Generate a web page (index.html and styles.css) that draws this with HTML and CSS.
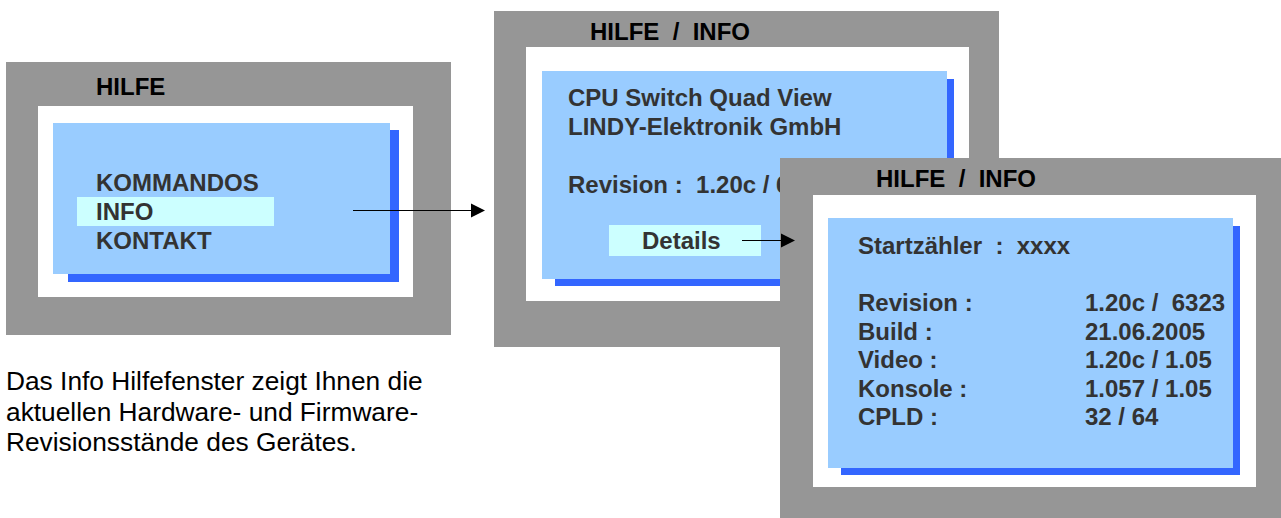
FILE: index.html
```html
<!DOCTYPE html>
<html lang="de">
<head>
    <meta charset="UTF-8">
    <title>Hilfe / Info</title>
    <link rel="stylesheet" href="styles.css">
</head>
<body>
    <div class="canvas">
        <div class="intro">
            <section class="win win-main">
                <h2 class="win-title">HILFE</h2>
                <div class="win-frame">
                    <div class="panel">
                        <ul class="menu">
                            <li>KOMMANDOS</li>
                            <li class="menu-active">INFO</li>
                            <li>KONTAKT</li>
                        </ul>
                    </div>
                </div>
            </section>
            <p class="caption">Das Info Hilfefenster zeigt Ihnen die<br>aktuellen Hardware- und Firmware-<br>Revisionsstände des Gerätes.</p>
        </div>

        <section class="win win-info">
            <h2 class="win-title">HILFE  /  INFO</h2>
            <div class="win-frame">
                <div class="panel">
                    <p class="panel-text">CPU Switch Quad View<br>LINDY-Elektronik GmbH</p>
                    <p class="panel-text rev-line">Revision :  1.20c / 6323</p>
                    <div class="details-btn">Details</div>
                </div>
            </div>
        </section>

        <section class="win win-details">
            <h2 class="win-title">HILFE  /  INFO</h2>
            <div class="win-frame">
                <div class="panel">
                    <p class="panel-text">Startzähler  :  xxxx</p>
                    <dl class="rev-table">
                        <dt>Revision :</dt><dd>1.20c /  6323</dd>
                        <dt>Build :</dt><dd>21.06.2005</dd>
                        <dt>Video :</dt><dd>1.20c / 1.05</dd>
                        <dt>Konsole :</dt><dd>1.057 / 1.05</dd>
                        <dt>CPLD :</dt><dd>32 / 64</dd>
                    </dl>
                </div>
            </div>
        </section>

        <!-- connector arrows -->
        <svg class="arrow arrow-info" width="133" height="15" viewBox="0 0 133 15">
            <line x1="0" y1="7.5" x2="120" y2="7.5" stroke="#000" stroke-width="1.2"/>
            <polygon points="118,0.5 132,7.5 118,14.5" fill="#000"/>
        </svg>
        <svg class="arrow arrow-details" width="54" height="15" viewBox="0 0 54 15">
            <line x1="0" y1="7.5" x2="41" y2="7.5" stroke="#000" stroke-width="1.2"/>
            <polygon points="39,0.5 53,7.5 39,14.5" fill="#000"/>
        </svg>
    </div>
</body>
</html>
```

FILE: styles.css
```css
body {
    margin: 0;
    background: #fff;
    font-family: "Liberation Sans", Arial, sans-serif;
    overflow: hidden;
}
.canvas {
    position: relative;
    width: 1281px;
    height: 518px;
    overflow: hidden;
}
.intro {
    padding: 62px 0 0 6px;
}
.win {
    background: #969696;
    box-sizing: border-box;
}
.win-title {
    margin: 0;
    font-size: 24px;
    line-height: 29px;
    font-weight: bold;
    color: #000;
    white-space: pre;
}
.win-frame {
    position: relative;
    z-index: 0;
    background: #fff;
    box-sizing: border-box;
}
.panel {
    position: relative;
    background: #99ccff;
    box-sizing: border-box;
    color: #333;
    font-size: 24px;
    font-weight: bold;
    line-height: 29px;
}
.panel::before {
    content: "";
    position: absolute;
    left: 13px;
    right: -7px;
    top: 8px;
    bottom: -7px;
    background: #3366ff;
    z-index: -1;
}

/* main menu window */
.win-main {
    width: 445px;
    height: 273px;
    padding-top: 10px;
}
.win-main .win-title {
    margin-left: 90px;
}
.win-main .win-frame {
    margin: 5px 0 0 32px;
    width: 375px;
    height: 191px;
    padding: 17px 0 0 15px;
}
.win-main .panel {
    width: 337px;
    height: 151px;
    padding: 45px 0 0 24px;
}
.win-main .panel::before {
    left: 15px;
    right: -9px;
    top: 7px;
    bottom: -8px;
}
.menu {
    list-style: none;
    margin: 0;
    padding: 0;
}
.menu li {
    width: 197px;
    padding-left: 19px;
    box-sizing: border-box;
}
.menu .menu-active {
    background: #ccffff;
}
.caption {
    margin: 31px 0 0;
    font-size: 26.3px;
    line-height: 30.5px;
    color: #000;
}

/* info window */
.win-info {
    position: absolute;
    left: 494px;
    top: 11px;
    width: 505px;
    height: 336px;
    padding-top: 6px;
}
.win-info .win-title,
.win-details .win-title {
    margin-left: 96px;
}
.win-info .win-frame {
    margin: 1px 0 0 32px;
    width: 443px;
    height: 254px;
    padding: 24px 0 0 16px;
}
.win-info .panel {
    width: 405px;
    height: 208px;
    padding: 12px 0 0 26px;
}
.panel-text {
    margin: 0;
    white-space: pre;
}
.rev-line {
    margin-top: 29px;
}
.details-btn {
    margin: 26px 0 0 41px;
    width: 152px;
    height: 31px;
    padding: 1px 0 0 33px;
    box-sizing: border-box;
    background: #ccffff;
}

/* details window */
.win-details {
    position: absolute;
    left: 780px;
    top: 158px;
    width: 505px;
    height: 380px;
    padding-top: 6px;
}
.win-details .win-frame {
    margin: 2px 0 0 33px;
    width: 443px;
    height: 292px;
    padding: 23px 0 0 15px;
}
.win-details .panel {
    width: 405px;
    height: 250px;
    padding: 13px 0 0 30px;
}
.rev-table {
    display: grid;
    grid-template-columns: 227px auto;
    margin: 29px 0 0;
    line-height: 28.5px;
}
.rev-table dt,
.rev-table dd {
    margin: 0;
    white-space: pre;
}

.arrow {
    position: absolute;
    display: block;
}
.arrow-info {
    left: 353px;
    top: 203px;
}
.arrow-details {
    left: 742px;
    top: 233px;
}
```
